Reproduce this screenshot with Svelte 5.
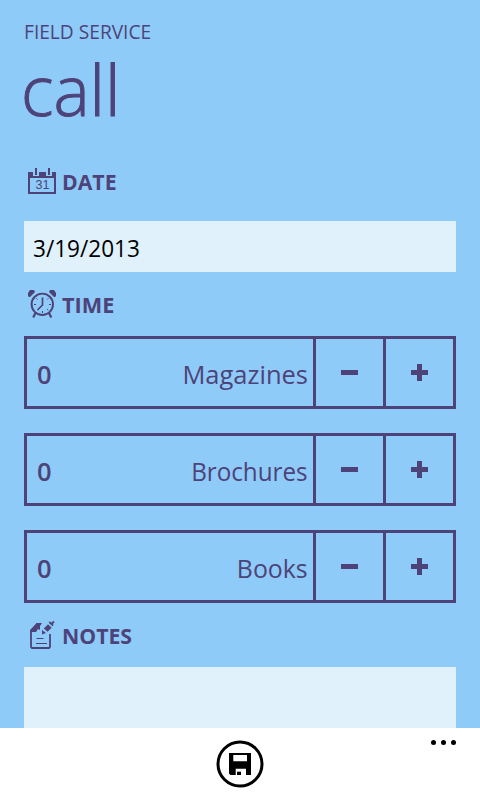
<script>
  let counters = $state([
    { label: 'Magazines', count: 0 },
    { label: 'Brochures', count: 0 },
    { label: 'Books', count: 0 }
  ]);
</script>

<main class="phone">
  <div class="content">
    <div class="app-name"><span>FIELD SERVICE</span></div>
    <h1><span>call</span></h1>

    <h2 class="date-head">
      <svg width="32" height="32" viewBox="0 -2 32 32" shape-rendering="crispEdges">
        <path fill="currentColor" fill-rule="evenodd" d="M2 6h28v22H2zM4 12v14h24V12z" />
        <path class="gap" d="M7 6h6v4H7zM20 6h6v4h-6z" />
        <path fill="currentColor" d="M9 2h2v7H9zM22 2h2v7h-2z" />
        <text x="9.500" y="23" font-size="12.500" textLength="14" lengthAdjust="spacingAndGlyphs">31</text>
      </svg>
      <span>DATE</span>
    </h2>
    <div class="date-input"><span>3/19/2013</span></div>

    <h2 class="time-head">
      <svg width="32" height="32" viewBox="0 0 32 32" fill="none" stroke="currentColor">
        <circle cx="16.300" cy="16.300" r="10.700" stroke-width="1.900" />
        <path fill="currentColor" stroke="none" d="M2 8V5l2-3h4l1 2-5 5H3zM30 8V5l-2-3h-4l-1 2 5 5h1z" />
        <path stroke-width="1.700" d="M16.500 9.500v7.500l-5 5" />
        <path stroke-width="1" d="M8 16.500h2M23 16.500h2M16.500 23v2M10.300 10.300l1.200 1.200M22.300 10.300l-1.200 1.200M22.300 22.300l-1.200-1.200" />
        <path stroke-width="2.200" d="M9.500 25 7.200 29.500M23 25l2.300 4.500" />
      </svg>
      <span>TIME</span>
    </h2>

    <div class="counters">
      {#each counters as item}
        <div class="counter">
          <div class="value">
            <span class="count">{item.count}</span>
            <span class="label {item.label.toLowerCase()}">{item.label}</span>
          </div>
          <button aria-label="Less" onclick={() => (item.count = Math.max(0, item.count - 1))}>
            <svg width="17" height="17" shape-rendering="crispEdges"><path fill="currentColor" d="M0 6h17v5H0z" /></svg>
          </button>
          <button aria-label="More" onclick={() => item.count++}>
            <svg width="17" height="17" shape-rendering="crispEdges"><path fill="currentColor" d="M0 6h6V0h5v6h6v5h-6v6H6v-6H0z" /></svg>
          </button>
        </div>
      {/each}
    </div>

    <h2 class="notes-head">
      <svg width="32" height="32" viewBox="0 0 32 32" fill="none" stroke="currentColor">
        <path stroke-width="1.800" d="M15 4h-4L5 11v16l1 1h17l1-1V14" />
        <path fill="currentColor" stroke="none" d="M4 12V10l7-7h5L14 6v4l-2-1-2 3z" />
        <path fill="currentColor" stroke="none" d="m17.800 8.500 4.200-4.200 3.700 3.400-4.200 4zM16 10l4 3-4 1.500z" />
        <path stroke-width="1.800" d="m23.300 2 3.800 3.700M25.500 4 28 1.500" />
        <path stroke-width="1" d="M10.500 18.500h7M10 23.500h11" />
      </svg>
      <span>NOTES</span>
    </h2>
    <div class="notes-input"></div>
  </div>

  <footer>
    <span class="side"></span>
    <button class="save" aria-label="Save">
      <svg width="48" height="48" viewBox="0 0 48 48">
        <circle cx="24" cy="24" r="22" fill="none" stroke="#000" stroke-width="3" />
        <path fill="#000" fill-rule="evenodd" d="M13 13h22v22H14.500L13 33.500zM17.300 15v6.300H31V15zM19.700 28.700V35H30v-6.300z" />
        <path fill="#000" d="M21 31.700h4V35h-4z" />
      </svg>
    </button>
    <button class="side more" aria-label="More options">
      <svg width="26" height="6"><circle cx="2.500" cy="2.500" r="2.500" /><circle cx="12.500" cy="2.500" r="2.500" /><circle cx="22.500" cy="2.500" r="2.500" /></svg>
    </button>
  </footer>
</main>

<style>
  :global(body) { margin: 0; }
  .phone {
    display: flex;
    flex-direction: column;
    width: 480px;
    height: 800px;
    overflow: hidden;
    background: #8fcbf8;
    color: #4d4379;
    font-family: "Open Sans", "Noto Sans", sans-serif;
  }
  .content {
    box-sizing: border-box;
    height: 728px;
    padding: 18px 24px 0;
    overflow: hidden;
  }
  span { white-space: nowrap; }
  .app-name { height: 28px; font-size: 19.500px; line-height: 28px; }
  .app-name span, h1 span, h2 span, .date-input span { display: inline-block; transform-origin: left center; }
  .app-name span { transform: scaleX(0.982); }
  h1 {
    height: 96px;
    margin: 0 0 0 -3px;
    font-size: 70px;
    font-weight: 300;
    line-height: 86px;
    -webkit-text-stroke: 1px #4d4379;
  }
  h1 span { transform: scaleX(0.975); }
  h2 {
    display: flex;
    align-items: center;
    gap: 4px;
    height: 32px;
    margin: 0;
    padding-left: 2px;
    font-size: 22px;
    font-weight: 700;
    line-height: 32px;
  }
  h2 span { transform: scaleX(0.965); }
  h2 svg { flex: none; display: block; }
  h2 text { fill: currentColor; font-family: "Liberation Sans", Arial, sans-serif; font-weight: 400; }
  .gap { fill: #8fcbf8; }
  .date-head { margin-top: 22px; }
  .date-head span { padding-top: 2px; }
  .date-input {
    height: 51px;
    margin-top: 25px;
    padding-left: 9px;
    background: #e0f1fc;
    color: #000;
    font-size: 24px;
    line-height: 54px;
  }
  .date-input span { transform: scaleX(0.94); }
  .time-head { margin-top: 16px; }
  .time-head span { transform: scaleX(0.985); }
  .counters { display: flex; flex-direction: column; gap: 24px; margin-top: 16px; }
  .counter { display: flex; box-sizing: border-box; height: 73px; border: 3px solid #4d4379; }
  .value {
    display: flex;
    flex: 1;
    justify-content: space-between;
    padding: 0 5px 0 10px;
    font-size: 25.500px;
    line-height: 71px;
  }
  .count { font-weight: 600; }
  .label { transform-origin: right center; }
  .brochures { transform: scaleX(0.95); }
  .books { transform: scaleX(0.975); }
  button {
    display: flex;
    align-items: center;
    justify-content: center;
    padding: 0;
    border: 0;
    background: none;
    color: inherit;
  }
  .counter button { box-sizing: border-box; width: 70px; border-left: 3px solid #4d4379; }
  .notes-head { margin-top: 17px; }
  .notes-head span { padding-bottom: 2px; }
  .notes-input { height: 61px; margin-top: 15px; background: #e0f1fc; }
  footer {
    display: flex;
    align-items: flex-start;
    justify-content: space-between;
    height: 72px;
    padding: 0 23px;
    background: #fff;
  }
  .side { width: 60px; }
  .save { margin-top: 12px; }
  .more { justify-content: flex-end; padding-top: 12px; }
</style>
